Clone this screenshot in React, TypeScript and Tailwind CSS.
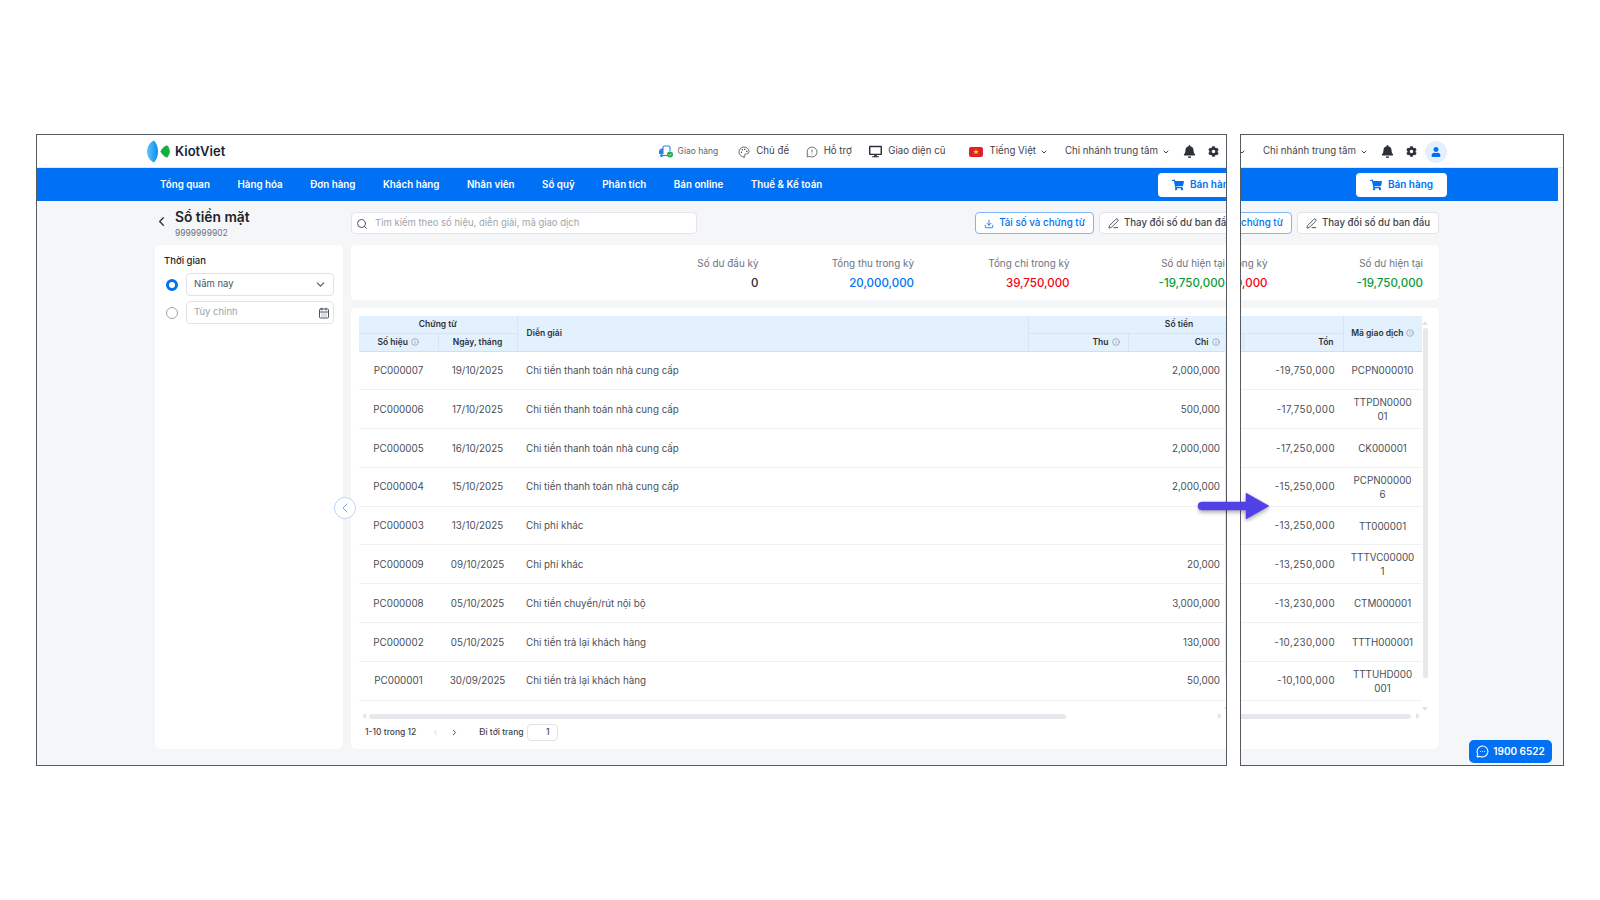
import React from 'react';
import { Search, ChevronDown, ChevronLeft, ChevronRight, CalendarDays, Download, PenLine, Palette, MessageCircleWarning, MessageCircleMore, Info } from 'lucide-react';
import { FaBell, FaCog, FaUser, FaShoppingCart, FaDesktop } from 'react-icons/fa';

const navItems = ['Tổng quan', 'Hàng hóa', 'Đơn hàng', 'Khách hàng', 'Nhân viên', 'Sổ quỹ', 'Phân tích', 'Bán online', 'Thuế & Kế toán'];

const rows = [
  { id: 'PC000007', date: '19/10/2025', note: 'Chi tiền thanh toán nhà cung cấp', chi: '2,000,000', ton: '-19,750,000', code: 'PCPN000010' },
  { id: 'PC000006', date: '17/10/2025', note: 'Chi tiền thanh toán nhà cung cấp', chi: '500,000', ton: '-17,750,000', code: 'TTPDN0000\n01' },
  { id: 'PC000005', date: '16/10/2025', note: 'Chi tiền thanh toán nhà cung cấp', chi: '2,000,000', ton: '-17,250,000', code: 'CK000001' },
  { id: 'PC000004', date: '15/10/2025', note: 'Chi tiền thanh toán nhà cung cấp', chi: '2,000,000', ton: '-15,250,000', code: 'PCPN00000\n6' },
  { id: 'PC000003', date: '13/10/2025', note: 'Chi phí khác', chi: '', ton: '-13,250,000', code: 'TT000001' },
  { id: 'PC000009', date: '09/10/2025', note: 'Chi phí khác', chi: '20,000', ton: '-13,250,000', code: 'TTTVC00000\n1' },
  { id: 'PC000008', date: '05/10/2025', note: 'Chi tiền chuyển/rút nội bộ', chi: '3,000,000', ton: '-13,230,000', code: 'CTM000001' },
  { id: 'PC000002', date: '05/10/2025', note: 'Chi tiền trả lại khách hàng', chi: '130,000', ton: '-10,230,000', code: 'TTTH000001' },
  { id: 'PC000001', date: '30/09/2025', note: 'Chi tiền trả lại khách hàng', chi: '50,000', ton: '-10,100,000', code: 'TTTUHD000\n001' },
];

const summary = [
  { label: 'Số dư đầu kỳ', value: '0', color: 'text-[#1f2328]' },
  { label: 'Tổng thu trong kỳ', value: '20,000,000', color: 'text-[#0070f4]' },
  { label: 'Tổng chi trong kỳ', value: '39,750,000', color: 'text-[#f5000f]' },
  { label: 'Số dư hiện tại', value: '-19,750,000', color: 'text-[#0a9a3c]' },
];

const Logo = () => (
  <svg width="23" height="23" viewBox="0 0 23 23">
    <defs>
      <linearGradient id="lens" x1="0" y1="0" x2="1" y2="0">
        <stop offset="0" stopColor="#5cc3f7" />
        <stop offset="1" stopColor="#0b8df0" />
      </linearGradient>
    </defs>
    <path d="M7 .5C3 2.500 0 6.500 0 11.500s3 9 7 11c2.500-2.500 4-6.500 4-11S9.500 3 7 .5z" fill="url(#lens)" />
    <path d="M13.500 11.500c.8-2.300 3-4.600 6.500-6.200 1.800 1.700 2.800 3.800 2.800 6.200s-1 4.500-2.800 6.200c-3.500-1.600-5.700-3.900-6.500-6.200z" fill="#12b03c" />
  </svg>
);

const TruckIcon = () => (
  <svg width="15" height="13" viewBox="0 0 15 13" fill="none">
    <path d="M1 9V5.500L3 3.500H5V9H1z" fill="#2f80ed" />
    <path d="M5 9V2.500C5 1.500 5.500 1 6.500 1H10.500C11.500 1 12 1.500 12 2.500V6" stroke="#2f80ed" strokeWidth="1.100" />
    <path d="M5 10.500H9" stroke="#2f80ed" strokeWidth="1.100" />
    <circle cx="3.500" cy="10.500" r="1.500" fill="#2f80ed" />
    <circle cx="12" cy="9.500" r="3" fill="#16b24a" />
    <path d="M10.700 9.500l1 1 1.700-1.800" stroke="#fff" strokeWidth=".8" />
  </svg>
);

const Flag = () => (
  <svg width="14" height="10" viewBox="0 0 14 10">
    <rect width="14" height="10" rx="2" fill="#e0212b" />
    <path d="M7 2l.8 2h2l-1.600 1.300.6 2L7 6.100 5.200 7.300l.6-2L4.200 4h2z" fill="#ffd800" />
  </svg>
);

const Radio = ({ on }: { on?: boolean }) =>
  on ? (
    <span className="w-[12px] h-[12px] rounded-full border-[3.500px] border-[#0070f4] bg-white shrink-0" />
  ) : (
    <span className="w-[12px] h-[12px] rounded-full border border-[#9ca3af] bg-white shrink-0" />
  );

const Hint = () => <Info size={8} className="inline-block ml-[3px] text-[#8a929c] align-[-1px]" />;

const TopBar = () => (
  <div className="h-[33px] shrink-0 flex items-center pl-[110px] pr-[116px] pt-[1px] bg-white border-b border-[#e5e7eb] text-[9.700px] text-[#3f444b]">
    <Logo />
    <span className="ml-[5px] text-[13px] font-semibold text-[#17233a]">KiotViet</span>
    <div className="ml-auto flex items-center">
      <TruckIcon />
      <span className="ml-[5px] mr-[20px] text-[8.500px] text-[#5c626a]">Giao hàng</span>
      <Palette size={12} strokeWidth={1.500} />
      <span className="ml-[6px] mr-[16.500px]">Chủ đề</span>
      <MessageCircleWarning size={12} strokeWidth={1.500} />
      <span className="ml-[6px] mr-[17.500px]">Hỗ trợ</span>
      <FaDesktop size={13} className="text-[#2c3138]" />
      <span className="ml-[6px] mr-[24px]">Giao diện cũ</span>
      <Flag />
      <span className="ml-[6px]">Tiếng Việt</span>
      <ChevronDown size={8} strokeWidth={3} className="ml-[4px] mr-[17px]" />
      <span>Chi nhánh trung tâm</span>
      <ChevronDown size={8} strokeWidth={3} className="ml-[4px] mr-[13px]" />
      <FaBell size={13} className="text-[#2c3138]" />
      <FaCog size={11} className="ml-[12px] mr-[8px] text-[#2c3138]" />
      <span className="w-[22px] h-[22px] rounded-full bg-[#e3f0fe] flex items-center justify-center">
        <FaUser size={10} className="text-[#0070f4]" />
      </span>
    </div>
  </div>
);

const NavBar = () => (
  <div className="mr-[5px] h-[33px] shrink-0 bg-[#0070f4] flex items-center pl-[123px] pr-[111px]">
    <div className="flex items-center gap-[27.500px] pt-[1px] text-[9.800px] font-semibold text-white">
      {navItems.map((item) => (
        <span key={item}>{item}</span>
      ))}
    </div>
    <button className="ml-auto w-[91px] h-[24px] rounded-[4px] bg-white flex items-center justify-center gap-[6px] text-[10px] font-semibold text-[#0070f4]">
      <FaShoppingCart size={12} />
      Bán hàng
    </button>
  </div>
);

const Toolbar = () => (
  <div className="h-[33px] mb-[4px] flex items-start">
    <div className="w-[188px] mr-[8px] shrink-0 flex">
      <ChevronLeft size={15} strokeWidth={2} className="mt-[6px] ml-[-1px] mr-[6px] text-[#2c3138]" />
      <div>
        <div className="text-[13.800px] leading-[18px] font-semibold text-[#1f2328]">Sổ tiền mặt</div>
        <div className="text-[8.500px] leading-[12px] mt-[1px] text-[#6b7280]">9999999902</div>
      </div>
    </div>
    <div className="mt-[4px] w-[346px] h-[22px] rounded-[4px] bg-white border border-[#e3e5e8] flex items-center pl-[4px] pt-[1px] text-[9.500px] text-[#a0a5ac]">
      <Search size={12} className="mr-[7px] text-[#4b5563]" />
      Tìm kiếm theo số hiệu, diễn giải, mã giao dịch
    </div>
    <div className="ml-auto mt-[4px] flex gap-[5px]">
      <button className="w-[119px] h-[22px] rounded-[4px] bg-white border border-[#7db5f8] flex items-center justify-center gap-[5px] pt-[1px] text-[9.800px] font-medium text-[#0070f4]">
        <Download size={10} />
        Tải số và chứng từ
      </button>
      <button className="w-[142px] h-[22px] rounded-[4px] bg-white border border-[#e0e3e7] flex items-center justify-center gap-[5px] pt-[1px] text-[9.700px] font-medium text-[#3f444b]">
        <PenLine size={11} />
        Thay đổi số dư ban đầu
      </button>
    </div>
  </div>
);

const Sidebar = () => (
  <div className="w-[188px] mr-[8px] shrink-0 rounded-[5px] bg-white px-[9px] pt-[9px]">
    <div className="text-[9.500px] leading-[13px] font-medium text-[#1f2328]">Thời gian</div>
    <div className="mt-[6px] flex items-center gap-[8px] pl-[2px]">
      <Radio on />
      <div className="flex-1 h-[23px] rounded-[4px] border border-[#e0e3e7] flex items-center justify-between pl-[7px] pr-[6px] text-[9.500px] text-[#4b5563]">
        Năm nay
        <ChevronDown size={13} className="text-[#4b5563]" />
      </div>
    </div>
    <div className="mt-[5px] flex items-center gap-[8px] pl-[2px]">
      <Radio />
      <div className="flex-1 h-[23px] rounded-[4px] border border-[#e0e3e7] flex items-center justify-between pl-[7px] pr-[3px] text-[9.500px] text-[#9ca3af]">
        Tùy chỉnh
        <CalendarDays size={12} className="text-[#4b5563]" />
      </div>
    </div>
  </div>
);

const Summary = () => (
  <div className="h-[55px] rounded-[5px] bg-white flex justify-end pr-[16px] pt-[11px]">
    {summary.map((s) => (
      <div key={s.label} className="w-[155.500px] text-right">
        <div className="text-[9.900px] leading-[14px] text-[#6b7280]">{s.label}</div>
        <div className={`mt-[6px] text-[11.500px] leading-[14px] font-medium ${s.color}`}>{s.value}</div>
      </div>
    ))}
  </div>
);

const DataTable = ({ scrolled }: { scrolled?: boolean }) => (
  <div className="flex h-[385px]">
    <div className="w-[867px] overflow-hidden shrink-0">
      <table className={`table-fixed w-[1050px] border-collapse text-[9.800px] text-[#4a4f57] ${scrolled ? 'ml-[-185px]' : ''}`}>
        <colgroup>
          <col className="w-[79px]" />
          <col className="w-[79px]" />
          <col className="w-[511px]" />
          <col className="w-[100px]" />
          <col className="w-[102px]" />
          <col className="w-[100px]" />
          <col className="w-[79px]" />
        </colgroup>
        <thead className="bg-[#e3f0fe] text-[8.500px] font-semibold text-[#2c3138]">
          <tr className="h-[17px]">
            <th colSpan={2} className="font-semibold text-center border-r border-b border-[#d6e4f5]">Chứng từ</th>
            <th rowSpan={2} className="font-semibold text-left pl-[9px] border-r border-[#d6e4f5]">Diễn giải</th>
            <th colSpan={3} className="font-semibold text-center border-r border-b border-[#d6e4f5]">Số tiền</th>
            <th rowSpan={2} className="font-semibold text-center">Mã giao dịch<Hint /></th>
          </tr>
          <tr className="h-[18px] border-b border-[#cfe0f5]">
            <th className="font-semibold text-center border-r border-[#d6e4f5]">Số hiệu<Hint /></th>
            <th className="font-semibold text-center border-r border-[#d6e4f5]">Ngày, tháng</th>
            <th className="font-semibold text-right pr-[8px] border-r border-[#d6e4f5]">Thu<Hint /></th>
            <th className="font-semibold text-right pr-[10px] border-r border-[#d6e4f5]">Chi<Hint /></th>
            <th className="font-semibold text-right pr-[9px] border-r border-[#d6e4f5]">Tồn</th>
          </tr>
        </thead>
        <tbody className="[&_td]:pt-[2px]">
          {rows.map((r) => (
            <tr key={r.id} className="h-[38.800px] border-b border-[#eef0f2]">
              <td className="text-center">{r.id}</td>
              <td className="text-center">{r.date}</td>
              <td className="pl-[9px]">{r.note}</td>
              <td />
              <td className="text-right pr-[10px]">{r.chi}</td>
              <td className="text-right pr-[8px] tracking-[0.4px]">{r.ton}</td>
              <td className="text-center whitespace-pre-line leading-[14px]">{r.code}</td>
            </tr>
          ))}
        </tbody>
      </table>
    </div>
    <div className="ml-[-2px] w-[6px] pt-[5px] flex flex-col items-center">
      <span className="shrink-0 w-0 h-0 border-x-[3px] border-x-transparent border-b-[4px] border-b-[#dfe3e8]" />
      <span className="shrink-0 mt-[3px] w-[5px] h-[350px] rounded-full bg-[#e6e8eb]" />
      <span className="shrink-0 mt-[29px] w-0 h-0 border-x-[3px] border-x-transparent border-t-[4px] border-t-[#dfe3e8]" />
    </div>
  </div>
);

const HorizontalBar = ({ scrolled }: { scrolled?: boolean }) => (
  <div className="mt-[12px] h-[6px] w-[863px] flex items-center pl-[3px]">
    <span className="w-0 h-0 border-y-[3px] border-y-transparent border-r-[4px] border-r-[#e3e5e8]" />
    <div className="flex-1 mx-[3px] flex">
      {scrolled ? (
        <span className="ml-[155px] w-[689px] h-[5px] rounded-full bg-[#e6e8eb]" />
      ) : (
        <span className="w-[697px] h-[5px] rounded-full bg-[#e6e8eb]" />
      )}
    </div>
    <span className="w-0 h-0 border-y-[3px] border-y-transparent border-l-[4px] border-l-[#e3e5e8]" />
  </div>
);

const Pager = () => (
  <div className="mt-[4px] h-[18px] pl-[6px] flex items-center text-[8.500px] font-medium text-[#3f444b]">
    <span>1-10 trong 12</span>
    <ChevronLeft size={9} className="ml-[15px] text-[#c4c8cd]" />
    <ChevronRight size={9} strokeWidth={2.500} className="ml-[10px] text-[#3f444b]" />
    <span className="ml-[20px]">Đi tới trang</span>
    <span className="ml-[3px] w-[31px] h-[17px] rounded-[4px] border border-[#e0e3e7] text-right pr-[7px] leading-[15px]">1</span>
  </div>
);

const Screen = ({ scrolled }: { scrolled?: boolean }) => (
  <div className="w-[1328px] h-full shrink-0 flex flex-col bg-[#f5f6f8]">
    <TopBar />
    <NavBar />
    <div className="relative flex-1 pl-[118px] pr-[124px] pt-[7px]">
      <Toolbar />
      <div className="flex h-[504px]">
        <Sidebar />
        <div className="flex-1 min-w-0 flex flex-col gap-[8px]">
          <Summary />
          <div className="flex-1 rounded-[5px] bg-white pl-[8px] pt-[8px]">
            <DataTable scrolled={scrolled} />
            <HorizontalBar scrolled={scrolled} />
            <Pager />
          </div>
        </div>
      </div>
      <span className="absolute left-[297px] top-[296px] w-[22px] h-[22px] rounded-full bg-white border border-[#b9d6fb] flex items-center justify-center">
        <ChevronLeft size={16} strokeWidth={1.500} className="text-[#6aa8f7]" />
      </span>
    </div>
  </div>
);

const App = () => {
  return (
    <div className="relative w-[1600px] h-[900px] overflow-hidden bg-white font-[Inter,sans-serif]">
      <div className="flex gap-[13px] pt-[134px] pl-[36px]">
        <div className="w-[1191px] h-[632px] border border-[#555b61] overflow-hidden flex justify-start">
          <Screen />
        </div>
        <div className="relative w-[324px] h-[632px] border border-[#555b61] overflow-hidden flex justify-end">
          <Screen scrolled />
          <button className="absolute right-[11px] bottom-[2px] w-[83px] h-[23px] rounded-[5px] bg-[#0070f4] flex items-center justify-center gap-[4px] text-[10px] font-semibold text-white">
            <MessageCircleMore size={13} />
            1900 6522
          </button>
        </div>
      </div>
      <svg className="absolute left-[1197px] top-[490px]" width="76" height="32" viewBox="0 0 76 32">
        <path d="M5 12h44V3l23 13-23 13v-9H5a4 4 0 0 1 0-8z" fill="#5040e6" stroke="#5040e6" strokeWidth=".5" className="drop-shadow-[0_2px_2px_rgba(0,0,0,0.35)]" />
      </svg>
    </div>
  );
};

export default App;
